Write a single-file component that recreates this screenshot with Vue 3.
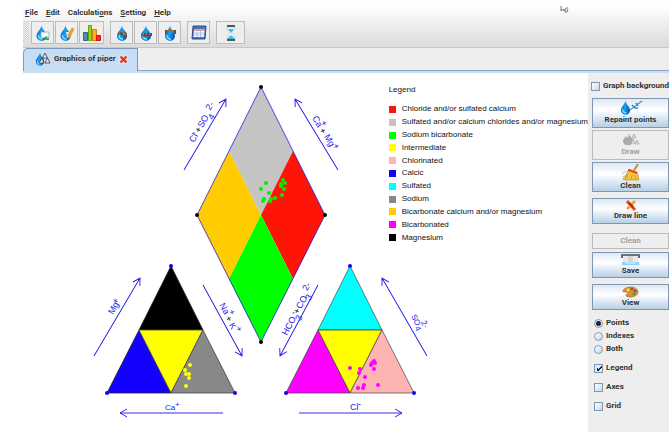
<script setup>
import { ref } from 'vue'

const menus = [
  { pre: '', key: 'F', post: 'ile' },
  { pre: '', key: 'E', post: 'dit' },
  { pre: 'Calculati', key: 'o', post: 'ns' },
  { pre: '', key: 'S', post: 'etting' },
  { pre: '', key: 'H', post: 'elp' }
]

const legend = [
  { color: '#ff1408', text: 'Chloride and/or sulfated calcium' },
  { color: '#c4c4c4', text: 'Sulfated and/or calcium chlorides and/or magnesium' },
  { color: '#00ff00', text: 'Sodium bicarbonate' },
  { color: '#ffff00', text: 'Intermediate' },
  { color: '#ffb4b4', text: 'Chlorinated' },
  { color: '#1400ff', text: 'Calcic' },
  { color: '#00ffff', text: 'Sulfated' },
  { color: '#888888', text: 'Sodium' },
  { color: '#ffcc00', text: 'Bicarbonate calcium and/or magnesium' },
  { color: '#ff00ff', text: 'Bicarbonated' },
  { color: '#000000', text: 'Magnesium' }
]

const areas = [
  { p: '261,87 293,151 261,215 229,151', f: '#c4c4c4' },
  { p: '229,151 261,215 229,279 197,215', f: '#ffcc00' },
  { p: '293,151 325,215 293,279 261,215', f: '#ff1408' },
  { p: '261,215 293,279 261,342 229,279', f: '#00ff00' },
  { p: '171,266 203,330 139,330', f: '#000000', s: '#222' },
  { p: '139,330 171,393 107,393', f: '#1400ff', s: '#222' },
  { p: '139,330 203,330 171,393', f: '#ffff00', s: '#444' },
  { p: '203,330 235,393 171,393', f: '#888888', s: '#444' },
  { p: '350,266 382,330 318,330', f: '#00ffff', s: '#555' },
  { p: '318,330 350,393 286,393', f: '#ff00ff', s: '#444' },
  { p: '318,330 382,330 350,393', f: '#ffff00', s: '#444' },
  { p: '382,330 414,393 350,393', f: '#ffb4b4', s: '#555' }
]

const arrows = [
  [184, 170, 226, 99],
  [338, 170, 295, 99],
  [94, 356, 140, 278],
  [203, 285, 242, 356],
  [223, 413, 120, 413],
  [318, 285, 280, 356],
  [427, 356, 382, 278],
  [299, 413, 402, 413]
].map(([x1, y1, x2, y2]) => ({
  x2, y2,
  len: Math.hypot(x2 - x1, y2 - y1),
  rot: Math.atan2(y2 - y1, x2 - x1) * 180 / Math.PI
}))

const labels = [
  { x: 194, y: 143, r: -60, s: 9, t: [['Cl', 0, 0], ['-', 7, -3], ['+', 11, 0, 1], ['SO', 17, 0], ['4', 29, 5], ['2-', 36, -2]] },
  { x: 312, y: 118, r: 60, s: 9, t: [['Ca', 0, 0], ['+', 8, -5], ['+', 14, 0, 1], ['Mg', 22, -1], ['+', 34, -4]] },
  { x: 113, y: 315, r: -60, s: 9, t: [['Mg', 0, 0], ['+', 11, -2]] },
  { x: 219, y: 305, r: 61, s: 9, t: [['Na', 0, 0], ['+', 10, -5], ['+', 14, 1, 1], ['K', 22, 1], ['+', 28, -3]] },
  { x: 165, y: 410, r: 0, s: 8, t: [['Ca', 0, 0], ['+', 10, -3]] },
  { x: 287, y: 336, r: -62, s: 9, t: [['HCO', 0, 0], ['3', 19, 5], ['-', 22, -3], ['+', 24, 0, 1], ['CO', 30, 0], ['3', 42, 4], ['2-', 49, -3]] },
  { x: 411, y: 316, r: 64, s: 8, t: [['SO', 0, 0], ['4', 12, 2], ['2-', 10, -6]] },
  { x: 350, y: 410, r: 0, s: 9, t: [['Cl', 0, 0], ['-', 8, -3]] }
]

const samples = [
  { color: '#00f000', pts: [[266, 183], [261, 189], [269, 193], [264, 199], [263, 201], [271, 199], [270, 201], [275, 198], [282, 195], [284, 189], [285, 183], [283, 180], [281, 184], [281, 186]] },
  { color: '#ffff00', pts: [[190, 365], [185, 370], [186, 374], [189, 374], [189, 378], [186, 386]] },
  { color: '#ff00ff', pts: [[350, 368], [360, 369], [359, 373], [365, 377], [364, 385], [358, 388], [363, 388], [378, 385], [374, 369], [371, 365], [372, 363], [374, 361], [375, 363]] }
]

const corners = [
  [261, 87, '#000'], [197, 215, '#000'], [325, 215, '#000'], [261, 342, '#000'],
  [171, 266, '#1400ff'], [107, 393, '#1400ff'], [235, 393, '#1400ff'],
  [350, 266, '#1400ff'], [286, 393, '#1400ff'], [414, 393, '#1400ff']
]

const mode = ref('Points')
const background = ref(false)
const shown = ref({ Legend: true, Axes: false, Grid: false })
</script>

<template>
  <svg class="defs" aria-hidden="true">
    <defs>
      <linearGradient id="water" x1="0" x2="1" y1="0" y2="0.3">
        <stop offset="0" stop-color="#0a50c8" />
        <stop offset="0.55" stop-color="#18a4f0" />
        <stop offset="1" stop-color="#0c5cc0" />
      </linearGradient>
      <symbol id="drop" viewBox="0 0 12 16">
        <path d="M6 0C6 4 1 7 1 11a5 5 0 0 0 10 0C11 7 6 4 6 0z" fill="url(#water)" />
        <path d="M3 10c0 3 2 4 4 4" fill="none" stroke="#6fe0ff" stroke-width="1.4" />
      </symbol>
    </defs>
  </svg>

  <div class="window">
    <header class="top">
      <nav class="menu">
        <button v-for="m in menus" :key="m.key" type="button">{{ m.pre }}<u>{{ m.key }}</u>{{ m.post }}</button>
      </nav>
      <div class="toolbar">
        <span class="grip"></span>
        <div class="group">
          <button type="button" aria-label="Open">
            <svg width="16" height="18" viewBox="0 0 16 18"><use href="#drop" x="0" y="1" width="13" height="16" /><path d="M6 8h8v5h-4l-1 1H6z" fill="#f4f8ff" stroke="#8aa6c8" stroke-width=".8" /><path d="M9 15l3-3v2h2v2h-3z" fill="#34b034" /></svg>
          </button>
          <button type="button" aria-label="Edit">
            <svg width="16" height="18" viewBox="0 0 16 18"><use href="#drop" x="0" y="1" width="13" height="16" /><path d="M7 8h5l-1 5-3 1z" fill="#e6eefc" /><path d="M13 4l2 1-4 8-2 1v-3z" fill="#f5a31c" stroke="#b97920" stroke-width=".5" /></svg>
          </button>
          <button type="button" class="wide" aria-label="Chart">
            <svg width="20" height="18" viewBox="0 0 20 18"><path d="M1.500 8.500h4v8h-4z" fill="#5a86c4" stroke="#3b608f" /><path d="M6.500 1.500h3v15h-3z" fill="#8fe00c" stroke="#58a800" /><path d="M10.500 5.500h4v11h-4z" fill="#ffad28" stroke="#dd7c12" /><path d="M14.500 11.500h4v5h-4z" fill="#f03030" stroke="#c81818" /></svg>
          </button>
        </div>
        <div class="group">
          <button type="button" aria-label="Ions">
            <svg width="16" height="18" viewBox="0 0 16 18"><use href="#drop" x="2" y="1" width="12" height="16" /><path d="M4 8h3l2 2 2-2 2 1v4h-2l-1-2-2 1-2-2H4z" fill="#714b28" /><path d="M5 9h1M9 10h3" stroke="#e0a25c" /></svg>
          </button>
          <button type="button" aria-label="Balance">
            <svg width="16" height="18" viewBox="0 0 16 18"><use href="#drop" x="2" y="1" width="12" height="16" /><path d="M3 9h11v3H9l-2 1-3-1z" fill="#714b28" /><path d="M4 10h2M8 10h1M11 10h1" stroke="#e0a25c" /></svg>
          </button>
          <button type="button" aria-label="Hardness">
            <svg width="16" height="18" viewBox="0 0 16 18"><use href="#drop" x="2" y="1" width="12" height="16" /><path d="M3 6h11v4h-2V8H5v2H3z" fill="#714b28" /><path d="M5 7h7" stroke="#c99050" /></svg>
          </button>
        </div>
        <div class="group">
          <button type="button" aria-label="Table">
            <svg width="18" height="18" viewBox="0 0 18 18"><path d="M3 2h13l-1 13H2z" fill="#4474c0" stroke="#2a4c90" /><path d="M4 5h10.500l-.5 8H3.500z" fill="#fff" /><path d="M4 6h10.500" stroke="#f07c50" stroke-width="1.500" /><path d="M4 9h10M4 11h10M7 6v7M10.500 6v7" stroke="#9db5dc" stroke-width=".8" /></svg>
          </button>
        </div>
        <div class="group">
          <button type="button" class="large" aria-label="Wait">
            <svg width="12" height="18" viewBox="0 0 12 18"><path d="M2 3h8c0 4-3 4-3 6s3 2 3 6H2c0-4 3-4 3-6S2 7 2 3z" fill="#e4faff" stroke="#a6cbd9" stroke-width=".6" /><path d="M3 5h6L6 9zM2 15l4-4 4 4z" fill="#3cbce8" /><path d="M2 2h8M2 16h8" stroke="#20262c" stroke-width="1.600" /></svg>
          </button>
        </div>
      </div>
      <svg class="pointer" viewBox="0 0 9 9" aria-hidden="true"><path d="M1 1v5l2-2 1 2 2-3h2M5 4v3h2l1-3" fill="none" stroke="#777" /></svg>
    </header>

    <div class="tabs">
      <div class="tab">
        <svg width="16" height="16" viewBox="0 0 16 16"><use href="#drop" x="0" y="1" width="10" height="14" /><path d="M10 2l2.500 5h-5zM7 7l2 5H4zM12.500 7l2.500 5h-5z" fill="#eee" stroke="#334" stroke-width=".8" /></svg>
        <span>Graphics of piper</span>
        <button type="button" aria-label="Close tab">
          <svg width="9" height="9" viewBox="0 0 9 9"><path d="M0 0h9v9H0z" fill="#f0dce0" /><path d="M1.500 1.500l6 6M7.500 1.500l-6 6" stroke="#e03a1c" stroke-width="2.400" /></svg>
        </button>
      </div>
    </div>

    <main class="body">
      <section class="plot">
        <svg class="chart" viewBox="23 73 565 359" preserveAspectRatio="xMinYMin meet" role="img" aria-label="Piper diagram">
          <polygon v-for="a in areas" :key="a.p" :points="a.p" :fill="a.f" :stroke="a.s || 'none'" stroke-width="0.8" />
          <polygon points="261,87 325,215 261,342 197,215" fill="none" stroke="#2a18e0" stroke-width="0.8" />
          <g v-for="(a, i) in arrows" :key="i" :transform="`translate(${a.x2} ${a.y2}) rotate(${a.rot})`">
            <path :d="`M${-a.len} 0H0M-7 -4L0 0L-7 4`" fill="none" stroke="#2414e8" stroke-width="0.9" />
          </g>
          <circle v-for="(c, i) in corners" :key="'c' + i" :cx="c[0]" :cy="c[1]" r="2" :fill="c[2]" />
          <g v-for="s in samples" :key="s.color" :fill="s.color">
            <circle v-for="(p, i) in s.pts" :key="i" :cx="p[0]" :cy="p[1]" r="2" />
          </g>
          <g v-for="(l, i) in labels" :key="'l' + i" :transform="`translate(${l.x} ${l.y}) rotate(${l.r})`" :font-size="l.s" class="ion">
            <text v-for="(t, j) in l.t" :key="j" :x="t[1]" :y="t[2]" :class="{ plus: t[3] }">{{ t[0] }}</text>
          </g>
        </svg>
        <div v-if="shown.Legend" class="legend">
          <h2>Legend</h2>
          <ul>
            <li v-for="l in legend" :key="l.text"><i :style="{ background: l.color }"></i>{{ l.text }}</li>
          </ul>
        </div>
      </section>

      <aside class="side">
        <label class="check first"><input v-model="background" type="checkbox" />Graph background</label>
        <div class="stack">
          <button type="button" class="act tall">
            <svg width="26" height="15" viewBox="0 0 26 15"><use href="#drop" x="2" y="0" width="11" height="15" /><path d="M12 10L24 1" stroke="#245a8c" /><path d="M14 5l3 3M18 3l2 3M16 8h4" stroke="#2292d8" stroke-width="1.500" /></svg>
            Repaint points
          </button>
          <button type="button" class="act tall" disabled>
            <svg width="18" height="15" viewBox="0 0 18 15"><path d="M7 1c0 3 4 5 4 8a4 4 0 0 1-5 4 4 4 0 0 1-5-4c0-2 2-3 3-5l2 2z" fill="#aaa" /><path d="M12 2l2 4h-4zM11 7l2 4H9zM15 8l2 4h-4z" fill="#ddd" stroke="#aaa" stroke-width=".8" /></svg>
            Draw
          </button>
          <button type="button" class="act tall">
            <svg width="20" height="17" viewBox="0 0 20 17"><path d="M17 0l-5 8" stroke="#d88a30" stroke-width="2" /><path d="M8 5l8 3 2 8H4c-3 0-2-2 0-3z" fill="#f5c43c" stroke="#c98a18" stroke-width=".7" /><path d="M7 6l9 3" stroke="#e03428" stroke-width="1.500" /><path d="M7 10l-2 5M11 11l-1 5M14 11l1 4" stroke="#cf9420" stroke-width=".8" /><path d="M1 10l4-3M2 13l3-2" stroke="#8cc8e8" /></svg>
            Clean
          </button>
        </div>
        <button type="button" class="act mid">
          <svg width="12" height="11" viewBox="0 0 12 11"><path d="M2 1l8 9" stroke="#e8482c" stroke-width="3" /><path d="M10 1L2 9" stroke="#f0a02c" stroke-width="2.500" /><path d="M4 3l4 4" stroke="#b81818" stroke-width="2" /></svg>
          Draw line
        </button>
        <div class="pair">
          <button type="button" class="act short" disabled>Clean</button>
          <button type="button" class="act mid">
            <svg width="19" height="12" viewBox="0 0 19 12"><path d="M2 1h15v8H2z" fill="#e8e8e8" /><path d="M7 2h5v6H7z" fill="#d5d5d5" /><path d="M1 4V1h17v3" fill="none" stroke="#444c58" stroke-width="1.600" /><path d="M1 8h17v3H1z" fill="#8fd0f4" /><path d="M4 9h11" stroke="#dff4ff" /></svg>
            Save
          </button>
        </div>
        <button type="button" class="act mid">
          <svg width="17" height="12" viewBox="0 0 17 12"><path d="M9 1c5 0 7 3 7 5s-2 5-8 5c-4 0-5-2-3-3s1-2-1-2-3 0-3-1c0-2 4-4 8-4z" fill="#dc9132" stroke="#a86418" stroke-width=".7" /><circle cx="6" cy="4" r="1.400" fill="#f5e44c" /><circle cx="10" cy="3" r="1.300" fill="#d83030" /><circle cx="13" cy="5" r="1.400" fill="#3468c8" /><circle cx="12" cy="8" r="1.400" fill="#38a048" /></svg>
          View
        </button>
        <div class="radios">
          <label v-for="m in ['Points', 'Indexes', 'Both']" :key="m" class="check">
            <input v-model="mode" type="radio" name="mode" :value="m" />{{ m }}
          </label>
        </div>
        <div class="options">
          <label v-for="k in ['Legend', 'Axes', 'Grid']" :key="k" class="check">
            <input v-model="shown[k]" type="checkbox" />{{ k }}
          </label>
        </div>
      </aside>
    </main>
  </div>
</template>

<style>
body { background: #fff; }
</style>

<style scoped>
* { box-sizing: border-box; }
.defs { position: absolute; width: 0; height: 0; }
.window {
  display: flex;
  flex-direction: column;
  min-height: calc(100vh - 2px);
  margin: 0 3px 0 23px;
  font: bold 8px/10px Roboto, "Liberation Sans", sans-serif;
  color: #333;
}
button { font: inherit; color: inherit; margin: 0; padding: 0; }
.top {
  position: relative;
  padding-top: 8px;
  background: linear-gradient(#fff 5px, #dcdcdc 46px);
  border-bottom: 1px solid #c8c8c8;
}
.menu { display: flex; gap: 8px; padding-left: 2px; }
.menu button { border: 0; background: none; }
.toolbar { display: flex; margin-top: 3px; padding-bottom: 3px; }
.grip {
  width: 6px;
  margin-right: 2px;
  background: repeating-conic-gradient(#ccc 0 25%, #f5f5f5 0 50%) 0 0 / 2px 2px;
}
.group { display: flex; gap: 1px; margin-right: 6px; }
.group button {
  display: flex;
  align-items: center;
  justify-content: center;
  width: 23px;
  height: 23px;
  border: 1px solid #bcbcbc;
  background: #eee;
}
.group .wide { width: 25px; }
.group .large { width: 29px; }
.pointer { position: absolute; top: 5px; right: 100px; width: 9px; height: 9px; }
.tabs {
  display: flex;
  background: #eee;
  border-bottom: 2px solid #c8ddf4;
  box-shadow: inset 0 -1px #8ea8cc;
}
.tab {
  display: flex;
  align-items: center;
  gap: 3px;
  height: 23px;
  padding: 0 9px 2px 11px;
  border: 1px solid #7a98c0;
  border-bottom: 0;
  border-radius: 5px 0 0 0;
  background: #c8ddf4;
}
.tab button { display: flex; border: 0; background: none; }
.body { flex: 1; display: flex; }
.plot { position: relative; flex: 1; min-width: 0; background: #fff; }
.chart { display: block; width: 100%; }
.ion { font-family: "Liberation Sans", sans-serif; font-weight: normal; fill: #2414e8; }
.plus { fill: #000; }
.legend {
  position: absolute;
  top: 12px;
  right: 0;
  font: 8px/10px "Liberation Sans", sans-serif;
  color: #111;
}
.legend h2 { margin: 0 0 8px; font: inherit; }
.legend ul {
  display: grid;
  grid-auto-rows: 1fr;
  align-items: center;
  height: 141px;
  margin: 0;
  padding: 0;
  list-style: none;
}
.legend li { display: flex; align-items: center; gap: 6px; white-space: nowrap; }
.legend i { width: 7px; height: 7px; }
.side {
  display: flex;
  flex-direction: column;
  width: 81px;
  padding: 8px 0 0 4px;
  background: #eee;
}
.check { display: flex; align-items: center; gap: 3px; white-space: nowrap; }
.first { margin: 0 0 7px -1px; }
.stack { display: grid; gap: 2px; margin-bottom: 6px; }
.pair { display: grid; gap: 3px; margin: 9px 0 6px; }
.act {
  display: flex;
  flex-direction: column;
  align-items: center;
  justify-content: flex-start;
  padding-top: 1px;
  line-height: 9px;
  border: 1px solid #8097b4;
  background: linear-gradient(#dce8f5, #fff 40%, #e6eff9 60%, #b8cfe5);
}
.act svg { flex: none; }
.act:disabled { color: #a0a0a0; border-color: #bbb; background: #eee; }
.tall { height: 30px; }
.mid { height: 26px; }
.short { height: 16px; padding-top: 2px; }
input {
  appearance: none;
  flex: none;
  width: 9px;
  height: 9px;
  margin: 0;
  border: 1px solid #8097b4;
  background: linear-gradient(135deg, #fff, #c4d8ec);
}
input[type="radio"] { border-radius: 50%; }
input[type="radio"]:checked { background: radial-gradient(circle, #222 2px, #e4edf7 3px); }
input[type="checkbox"]:checked {
  background: linear-gradient(135deg, transparent 40%, #222 40% 60%, transparent 60%) 3px 1px / 4px 5px no-repeat,
    linear-gradient(#222, #222) 2px 3px / 1px 3px no-repeat, #e0ebf6;
}
.radios { display: grid; gap: 3px; padding: 8px 0 0 2px; }
.options { display: grid; gap: 9px; padding: 9px 0 0 2px; }
</style>
